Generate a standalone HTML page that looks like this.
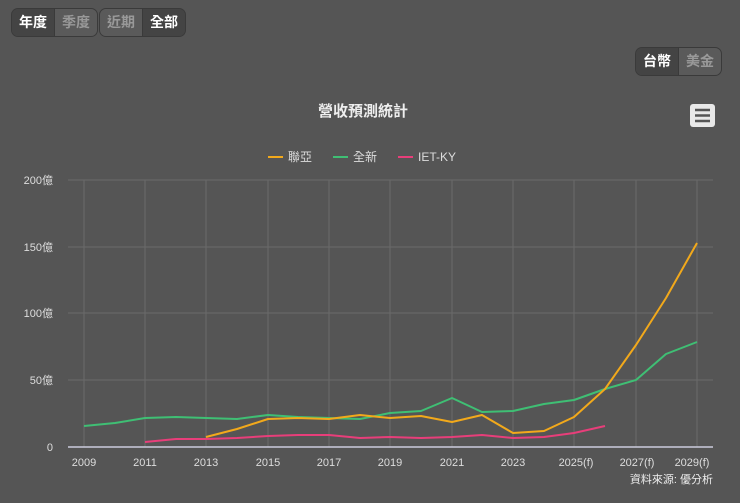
<!DOCTYPE html><html><head><meta charset="utf-8"><style>
body{margin:0;width:740px;height:503px;background:#555;font-family:"Liberation Sans","Noto Sans CJK TC",sans-serif;overflow:hidden;position:relative}
.g{position:absolute;display:flex;border:1px solid #3a3a3a;border-radius:7px;overflow:hidden;background:#4a4a4a}
.g span{display:block;padding:0 7px;height:27px;line-height:27px;font-size:14px;font-weight:bold;border-right:1px solid #3a3a3a}
.g span:last-child{border-right:none}
.a{background:#444;color:#fff}.i{background:#5a5a5a;color:#999}
</style></head><body>
<div class="g" style="left:11px;top:8px"><span class="a">年度</span><span class="i">季度</span></div>
<div class="g" style="left:99px;top:8px"><span class="i">近期</span><span class="a">全部</span></div>
<div class="g" style="left:635px;top:47px"><span class="a">台幣</span><span class="i">美金</span></div>
<svg width="740" height="503" style="position:absolute;left:0;top:0" font-family="Liberation Sans,Noto Sans CJK TC,sans-serif">
<text x="363" y="116" fill="#eee" font-size="15" font-weight="bold" text-anchor="middle">營收預測統計</text>
<rect x="690" y="104" width="25" height="23" rx="3" fill="#e8e8e8"/>
<g stroke="#555" stroke-width="2.5"><line x1="695" y1="110" x2="710" y2="110"/><line x1="695" y1="115.5" x2="710" y2="115.5"/><line x1="695" y1="121" x2="710" y2="121"/></g>
<g font-size="12" fill="#ddd"><line x1="268" y1="157" x2="283" y2="157" stroke="#f2a91b" stroke-width="2"/><text x="288" y="161">聯亞</text>
<line x1="333" y1="157" x2="348" y2="157" stroke="#3fbf74" stroke-width="2"/><text x="353" y="161">全新</text>
<line x1="398" y1="157" x2="413" y2="157" stroke="#e83e7a" stroke-width="2"/><text x="418" y="161">IET-KY</text></g>
<g stroke="#6a6a6a" stroke-width="1">
<line x1="68" y1="180" x2="713" y2="180"/><line x1="68" y1="247" x2="713" y2="247"/><line x1="68" y1="313" x2="713" y2="313"/><line x1="68" y1="380" x2="713" y2="380"/>
<line x1="84" y1="180" x2="84" y2="447"/><line x1="145" y1="180" x2="145" y2="447"/><line x1="206" y1="180" x2="206" y2="447"/><line x1="268" y1="180" x2="268" y2="447"/><line x1="329" y1="180" x2="329" y2="447"/><line x1="390" y1="180" x2="390" y2="447"/><line x1="452" y1="180" x2="452" y2="447"/><line x1="513" y1="180" x2="513" y2="447"/><line x1="574" y1="180" x2="574" y2="447"/><line x1="636" y1="180" x2="636" y2="447"/><line x1="697" y1="180" x2="697" y2="447"/></g>
<line x1="68" y1="447" x2="713" y2="447" stroke="#ccd" stroke-width="1.5"/>
<g font-size="11" fill="#ddd" text-anchor="end"><text x="53" y="184">200億</text><text x="53" y="251">150億</text><text x="53" y="317">100億</text><text x="53" y="384">50億</text><text x="53" y="451">0</text></g>
<g font-size="11" fill="#ddd" text-anchor="middle"><text x="84" y="466">2009</text><text x="145" y="466">2011</text><text x="206" y="466">2013</text><text x="268" y="466">2015</text><text x="329" y="466">2017</text><text x="390" y="466">2019</text><text x="452" y="466">2021</text><text x="513" y="466">2023</text><text x="576" y="466">2025(f)</text><text x="637" y="466">2027(f)</text><text x="692" y="466">2029(f)</text></g>
<text x="713" y="483" font-size="11" fill="#eee" text-anchor="end">資料來源: 優分析</text>
<g fill="none" stroke-width="2" stroke-linejoin="round">
<polyline stroke="#3fbf74" points="84,426 115,423 145,418 176,417 206,418 237,419 268,415 298,417 329,418 360,419 390,413 421,411 452,398 482,412 513,411 544,404 574,400 605,389 636,380 666,354 697,342"/>
<polyline stroke="#f2a91b" points="206,437 237,429 268,419 298,418 329,419 360,415 390,418 421,416 452,422 482,415 513,433 544,431 574,417 605,389 636,345 666,298 697,243"/>
<polyline stroke="#e83e7a" points="145,442 176,439 206,439 237,438 268,436 298,435 329,435 360,438 390,437 421,438 452,437 482,435 513,438 544,437 574,433 605,426"/>
</g></svg></body></html>
